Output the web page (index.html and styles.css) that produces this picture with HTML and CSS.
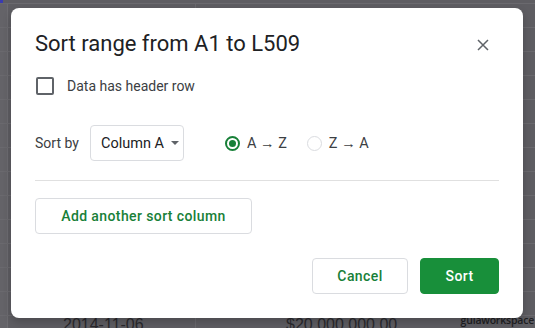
FILE: index.html
```html
<!DOCTYPE html>
<html lang="en">
<head>
<meta charset="utf-8">
<title>Sort range</title>
<link rel="stylesheet" href="styles.css">
</head>
<body>
<div class="sheet">
  <div class="corner-mark"></div>
  <div class="row"><div class="rh"></div><div class="c1"></div><div class="c2"></div></div>
  <div class="row"><div class="rh"></div><div class="c1"></div><div class="c2"></div></div>
  <div class="row"><div class="rh"></div><div class="c1"></div><div class="c2"></div></div>
  <div class="row"><div class="rh"></div><div class="c1"></div><div class="c2"></div></div>
  <div class="row"><div class="rh"></div><div class="c1"></div><div class="c2"></div></div>
  <div class="row"><div class="rh"></div><div class="c1"></div><div class="c2"></div></div>
  <div class="row"><div class="rh"></div><div class="c1"></div><div class="c2"></div></div>
  <div class="row"><div class="rh"></div><div class="c1"></div><div class="c2"></div></div>
  <div class="row"><div class="rh"></div><div class="c1"></div><div class="c2"></div></div>
  <div class="row"><div class="rh"></div><div class="c1"></div><div class="c2"></div></div>
  <div class="row"><div class="rh"></div><div class="c1"></div><div class="c2"></div></div>
  <div class="row"><div class="rh"></div><div class="c1"></div><div class="c2"></div></div>
  <div class="row"><div class="rh"></div><div class="c1"></div><div class="c2"></div></div>
  <div class="row"><div class="rh"></div><div class="c1 date">2014-11-06</div><div class="c2 money">$20.000.000,00</div></div>
</div>

<div class="watermark">guiaworkspace</div>

<div class="dialog" role="dialog">
  <div class="header">
    <h1 class="title">Sort range from A1 to L509</h1>
    <button class="close" aria-label="Close">
      <svg width="12" height="12" viewBox="0 0 12 12"><path d="M1 1L11 11M11 1L1 11" stroke="#5f6368" stroke-width="1.5" fill="none"/></svg>
    </button>
  </div>

  <label class="check-row">
    <span class="checkbox"></span>
    <span class="check-label">Data has header row</span>
  </label>

  <div class="sort-row">
    <span class="sort-label">Sort by</span>
    <div class="select">
      <span>Column A</span>
      <span class="caret"></span>
    </div>
    <div class="radios">
      <span class="radio-item"><span class="radio checked"></span><span class="radio-text">A → Z</span></span>
      <span class="radio-item"><span class="radio"></span><span class="radio-text">Z → A</span></span>
    </div>
  </div>

  <div class="divider"></div>

  <button class="btn btn-outline add">Add another sort column</button>

  <div class="footer">
    <button class="btn btn-outline cancel">Cancel</button>
    <button class="btn btn-primary sort">Sort</button>
  </div>
</div>
</body>
</html>
```

FILE: styles.css
```css
* { box-sizing: border-box; }

html, body {
  margin: 0;
  padding: 0;
  width: 535px;
  height: 328px;
  overflow: hidden;
  background: #5e5d62;
  font-family: Roboto, "Liberation Sans", Arial, sans-serif;
}

.sheet {
  position: relative;
  padding-top: 3px;
}

.corner-mark {
  position: absolute;
  left: 0;
  top: 0;
  width: 3px;
  height: 3px;
  background: #3a3bb0;
}

.row {
  display: grid;
  grid-template-columns: 8px 188px 1fr;
  height: 24px;
  border-top: 1px solid #6a696e;
}

.rh {
  background: #646368;
  border-right: 1px solid #6d6c71;
}

.c1 {
  border-right: 1px solid #6a696e;
}

.date, .money {
  font-family: "Liberation Sans", Arial, sans-serif;
  font-size: 16px;
  color: #2a292d;
  line-height: 16px;
  padding-top: 1px;
}

.date { padding-left: 55px; }
.money { padding-left: 90px; }

.watermark {
  position: absolute;
  right: 1px;
  bottom: 2px;
  font-family: "Open Sans", sans-serif;
  font-size: 10.5px;
  line-height: 11px;
  font-weight: 600;
  color: #1f1f22;
  letter-spacing: -0.2px;
}

.dialog {
  position: absolute;
  left: 11px;
  top: 8px;
  width: 512px;
  height: 310px;
  background: #fff;
  border-radius: 8px;
  padding: 0 24px;
  display: flex;
  flex-direction: column;
  box-shadow: 0 4px 8px rgba(0,0,0,0.2);
}

.header {
  margin-top: 22px;
  height: 28px;
  display: flex;
  align-items: center;
  justify-content: space-between;
}

.title {
  margin: 0;
  font-family: Roboto, sans-serif;
  font-weight: 400;
  font-size: 22px;
  line-height: 28px;
  color: #202124;
}

.close {
  border: 0;
  background: none;
  padding: 0;
  width: 12px;
  height: 12px;
  margin-right: 10px;
  margin-top: 1px;
  display: flex;
}

.check-row {
  margin-top: 19px;
  height: 18px;
  display: flex;
  align-items: center;
}

.checkbox {
  width: 18px;
  height: 18px;
  margin-left: 1px;
  border: 2px solid #5f6368;
  border-radius: 2px;
}

.check-label {
  margin-left: 13px;
  font-size: 14px;
  color: #3c4043;
}

.sort-row {
  margin-top: 30px;
  height: 36px;
  display: flex;
  align-items: center;
}

.sort-label {
  font-size: 14px;
  color: #3c4043;
  width: 55px;
}

.select {
  width: 94px;
  height: 36px;
  border: 1px solid #dadce0;
  border-radius: 4px;
  display: flex;
  align-items: center;
  padding-left: 10px;
  font-size: 14.5px;
  color: #202124;
}

.caret {
  margin-left: 7px;
  width: 0;
  height: 0;
  border-left: 4px solid transparent;
  border-right: 4px solid transparent;
  border-top: 4px solid #5f6368;
}

.radios {
  margin-left: 41px;
  display: flex;
  align-items: center;
  gap: 20px;
}

.radio-item {
  display: flex;
  align-items: center;
}

.radio {
  width: 15px;
  height: 15px;
  border: 1px solid #dadce0;
  border-radius: 50%;
  position: relative;
}

.radio.checked {
  border: 2px solid #188038;
}

.radio.checked::after {
  content: "";
  position: absolute;
  left: 2px;
  top: 2px;
  width: 7px;
  height: 7px;
  border-radius: 50%;
  background: #188038;
}

.radio-text {
  margin-left: 7px;
  font-size: 14.5px;
  color: #3c4043;
}

.divider {
  margin-top: 19px;
  height: 1px;
  background: #e0e0e0;
}

.btn {
  height: 36px;
  border-radius: 4px;
  font-family: Roboto, sans-serif;
  font-weight: 500;
  font-size: 14px;
  letter-spacing: 0.4px;
  cursor: pointer;
}

.btn-outline {
  background: #fff;
  border: 1px solid #dadce0;
  color: #188038;
}

.btn-primary {
  background: #188f3a;
  border: 1px solid #188f3a;
  color: #fff;
}

.add {
  margin-top: 17px;
  align-self: flex-start;
  width: 217px;
}

.footer {
  margin-top: 24px;
  display: flex;
  justify-content: flex-end;
  gap: 12px;
}

.cancel { width: 96px; }
.sort { width: 79px; }
```
